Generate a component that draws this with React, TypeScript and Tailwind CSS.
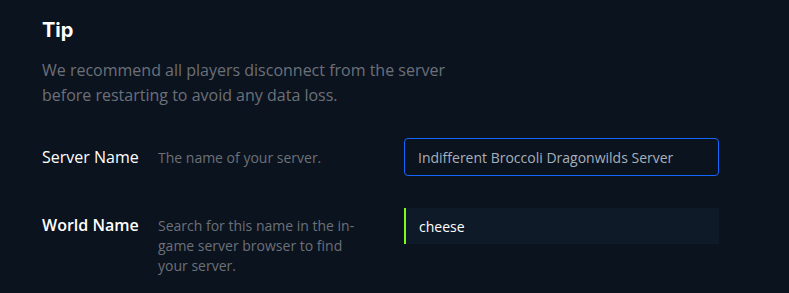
export default function App() {
  return (
    <div className="min-h-[293px] w-full bg-[#0b131e] pl-[42px] pt-[16px] pr-[70px]" style={{ fontFamily: '"Open Sans", sans-serif' }}>
      <h2 className="text-[20px] font-bold leading-[28px] text-white" style={{ fontFamily: 'Inter, sans-serif' }}>Tip</h2>
      <p className="mt-[14px] w-[420px] text-[16px] leading-[25px] text-[#6b7079]">
        We recommend all players disconnect from the server before restarting to avoid any data loss.
      </p>
      <div className="mt-[30px] flex items-center">
        <div className="w-[116px] text-[16px] text-white">Server Name</div>
        <div className="w-[246px] text-[14px] text-[#6b7079]">The name of your server.</div>
        <div className="flex h-[38px] w-[315px] items-center rounded-[4px] border border-[#1565ff] bg-[#0b131e] pl-[13px] text-[14px] text-[#a6b0bd]">
          Indifferent Broccoli Dragonwilds Server
        </div>
      </div>
      <div className="mt-[32px] flex items-start">
        <div className="w-[116px] pt-[6px] text-[16px] font-semibold leading-[22px] text-white">World Name</div>
        <div className="mr-[40px] w-[206px] pt-[8px] text-[14px] leading-[20px] text-[#6b7079]">
          Search for this name in the in-game server browser to find your server.
        </div>
        <div className="flex h-[36px] w-[315px] items-center border-l-2 border-[#7cfc1c] bg-[#0e1a27] pl-[13px] text-[14px] text-white">
          cheese
        </div>
      </div>
    </div>
  );
}
